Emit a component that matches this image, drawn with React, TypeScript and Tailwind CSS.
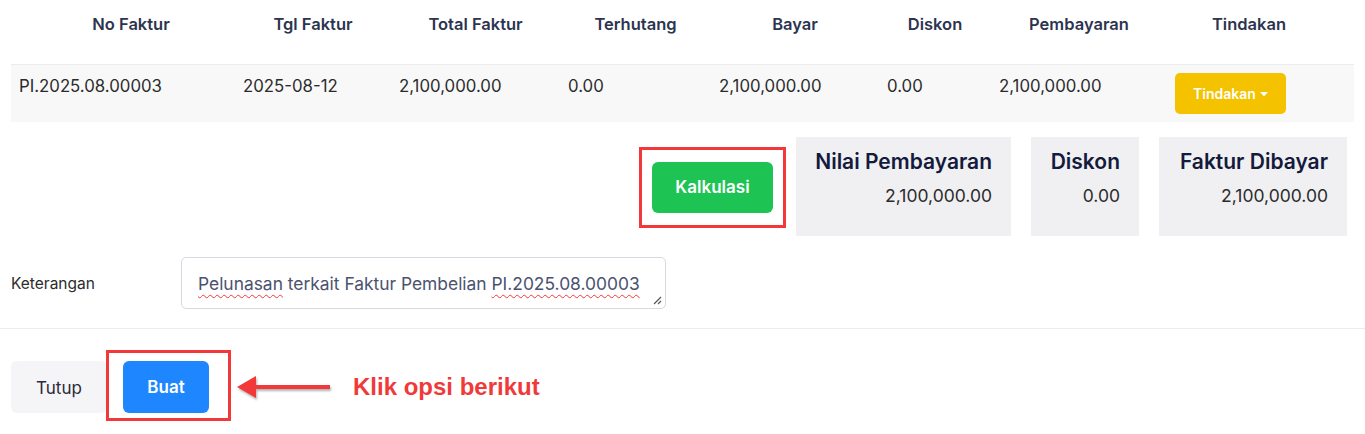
import { ReactNode } from "react";

const cols = [
  { label: "No Faktur", w: "w-[224px]", head: "pl-4" },
  { label: "Tgl Faktur", w: "w-[156px]", head: "" },
  { label: "Total Faktur", w: "w-[169px]", head: "" },
  { label: "Terhutang", w: "w-[151px]", head: "" },
  { label: "Bayar", w: "w-[168px]", head: "" },
  { label: "Diskon", w: "w-[112px]", head: "" },
  { label: "Pembayaran", w: "w-[176px]", head: "" },
  { label: "Tindakan", w: "w-[180px]", head: "pr-4" },
];

const row = [
  "PI.2025.08.00003",
  "2025-08-12",
  "2,100,000.00",
  "0.00",
  "2,100,000.00",
  "0.00",
  "2,100,000.00",
];

function SummaryCard({ title, value, w }: { title: string; value: string; w: string }) {
  return (
    <div className={`${w} h-[99px] bg-[#f0f0f2] pr-[19px] pt-[11px] text-right`}>
      <div className="text-[21px] leading-[27px] font-semibold text-[#141a3c]">{title}</div>
      <div className="mt-[9px] text-[17.5px] leading-[24px] text-[#2b2b2b]">{value}</div>
    </div>
  );
}

function Squiggle({ children }: { children: ReactNode }) {
  return (
    <span className="underline decoration-wavy decoration-[#f03a3a] decoration-1 underline-offset-[4px]">
      {children}
    </span>
  );
}

export default function App() {
  return (
    <div className="w-[1365px] h-[434px] bg-white overflow-hidden font-['Inter',sans-serif]">
      {/* tabel faktur */}
      <div className="px-[11px]">
        <div className="flex h-[64px] items-center">
          {cols.map((c) => (
            <div
              key={c.label}
              className={`${c.w} ${c.head} text-center text-[16.5px] font-semibold text-[#2c3450] -mt-[16px]`}
            >
              {c.label}
            </div>
          ))}
        </div>
        <div className="flex h-[58px] bg-[#f8f8f8] border-t border-[#ececec]">
          {row.map((v, i) => (
            <div
              key={i}
              className={`${cols[i].w} pl-2 pt-[9px] text-[16.8px] leading-[24px] text-[#2b2b2b]`}
            >
              {v}
            </div>
          ))}
          <div className={`${cols[7].w} pl-2 pt-[8px]`}>
            <button className="flex h-[41px] w-[111px] items-center justify-center gap-1 rounded-[5px] bg-[#f5c200] text-[14px] font-semibold text-white">
              Tindakan
              <svg width="8" height="5" viewBox="0 0 8 5" className="mt-[1px]">
                <path d="M0 0h8L4 4.5z" fill="white" />
              </svg>
            </button>
          </div>
        </div>
      </div>

      {/* kalkulasi + ringkasan */}
      <div className="mt-[15px] flex justify-end pr-[18px]">
        <div className="mt-[10px] mr-[10px] h-[81px] border-[3px] border-[#f23838] px-[10px] pt-[12px]">
          <button className="h-[51px] w-[121px] rounded-[6px] bg-[#1dc454] text-[17px] font-semibold text-white">
            Kalkulasi
          </button>
        </div>
        <div className="flex gap-[20px]">
          <SummaryCard title="Nilai Pembayaran" value="2,100,000.00" w="w-[215px]" />
          <SummaryCard title="Diskon" value="0.00" w="w-[108px]" />
          <SummaryCard title="Faktur Dibayar" value="2,100,000.00" w="w-[188px]" />
        </div>
      </div>

      {/* keterangan */}
      <div className="mt-[21px] flex items-center px-[11px]">
        <label className="w-[170px] pt-[2px] text-[15.5px] text-[#2b2b2b]">Keterangan</label>
        <div className="relative h-[52px] w-[485px] rounded-[5px] border border-[#d8d8e2] px-[16px] pt-[14px] text-[17.4px] leading-[24px] text-[#4b5270]">
          <Squiggle>Pelunasan</Squiggle> terkait Faktur Pembelian <Squiggle>PI.2025.08.00003</Squiggle>
          <svg width="9" height="9" viewBox="0 0 9 9" className="absolute bottom-[3px] right-[3px]">
            <path d="M8 1L1 8M8 5L5 8" stroke="#555" strokeWidth="1.2" />
          </svg>
        </div>
      </div>

      <div className="mt-[19px] h-px w-full bg-[#ececec]" />

      {/* tombol bawah */}
      <div className="mt-[32px] flex items-center px-[11px]">
        <button className="h-[52px] w-[96px] rounded-[6px] bg-[#f5f5f7] pt-[3px] text-[17px] text-[#2b2b3b]">
          Tutup
        </button>
        <div className="relative ml-[16px]">
          <button className="h-[52px] w-[86px] rounded-[6px] bg-[#1e87ff] pt-[2px] text-[17px] font-semibold text-white">
            Buat
          </button>
          <div className="pointer-events-none absolute -left-[17px] -top-[11px] h-[71px] w-[125px] border-[3px] border-[#f23838]" />
        </div>
        <svg width="96" height="26" viewBox="0 0 96 26" className="ml-[28px] drop-shadow-[1px_2px_1px_rgba(0,0,0,0.3)]">
          <path d="M0 13L19 2V24Z" fill="#f23838" />
          <rect x="17" y="11" width="76" height="4" fill="#f23838" />
        </svg>
        <span className="ml-[20px] font-['Liberation_Sans',Arial,sans-serif] text-[24px] font-bold text-[#f03a3a]">
          Klik opsi berikut
        </span>
      </div>
    </div>
  );
}
